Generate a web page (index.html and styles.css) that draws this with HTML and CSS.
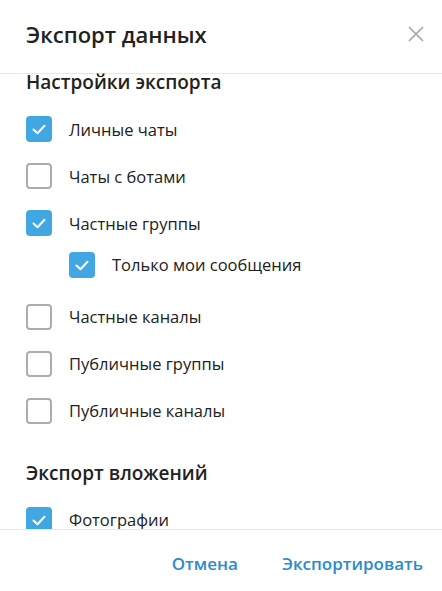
FILE: index.html
```html
<!DOCTYPE html>
<html lang="ru">
<head>
<meta charset="utf-8">
<link rel="stylesheet" href="styles.css">
</head>
<body>
<div class="dialog">
  <header class="head">
    <h1 class="title">Экспорт данных</h1>
    <button class="close" aria-label="Закрыть">
      <svg width="16" height="16" viewBox="0 0 16 16"><path d="M1 1L15 15M15 1L1 15" stroke="#a3a3a3" stroke-width="1.6" fill="none"/></svg>
    </button>
  </header>
  <main class="content">
    <h2 class="section-title first">Настройки экспорта</h2>
    <div class="row"><span class="box checked"><svg viewBox="0 0 26 26"><path d="M7.5 13.5l4 3.8 7-7.6" stroke="#fff" stroke-width="2" fill="none" stroke-linecap="round" stroke-linejoin="round"/></svg></span><span class="label">Личные чаты</span></div>
    <div class="row"><span class="box"></span><span class="label">Чаты с ботами</span></div>
    <div class="row"><span class="box checked"><svg viewBox="0 0 26 26"><path d="M7.5 13.5l4 3.8 7-7.6" stroke="#fff" stroke-width="2" fill="none" stroke-linecap="round" stroke-linejoin="round"/></svg></span><span class="label">Частные группы</span></div>
    <div class="row sub"><span class="box checked"><svg viewBox="0 0 26 26"><path d="M7.5 13.5l4 3.8 7-7.6" stroke="#fff" stroke-width="2" fill="none" stroke-linecap="round" stroke-linejoin="round"/></svg></span><span class="label">Только мои сообщения</span></div>
    <div class="row"><span class="box"></span><span class="label">Частные каналы</span></div>
    <div class="row"><span class="box"></span><span class="label">Публичные группы</span></div>
    <div class="row"><span class="box"></span><span class="label">Публичные каналы</span></div>
    <h2 class="section-title second">Экспорт вложений</h2>
    <div class="row"><span class="box checked"><svg viewBox="0 0 26 26"><path d="M7.5 13.5l4 3.8 7-7.6" stroke="#fff" stroke-width="2" fill="none" stroke-linecap="round" stroke-linejoin="round"/></svg></span><span class="label">Фотографии</span></div>
  </main>
  <footer class="foot">
    <button class="btn">Отмена</button>
    <button class="btn">Экспортировать</button>
  </footer>
</div>
</body>
</html>
```
FILE: styles.css
```css
* { box-sizing: border-box; }
html, body { margin: 0; padding: 0; background: #fff; }
body { font-family: "Open Sans", "Noto Sans", sans-serif; color: #222; }
.dialog { width: 442px; height: 591px; display: flex; flex-direction: column; overflow: hidden; }
.head { height: 74px; flex: none; display: flex; align-items: flex-start; justify-content: space-between; border-bottom: 1px solid #e7e7e7; padding: 0 18px 0 26px; }
.title { margin: 0; padding-top: 20px; font-size: 22px; line-height: 28px; font-weight: 600; color: #222; }
.close { border: 0; background: none; padding: 0; margin-top: 26px; width: 16px; height: 16px; display: block; }
.close svg { display: block; }
.content { flex: 1; min-height: 0; padding: 0 26px; }
.section-title { margin: 0; font-size: 19px; line-height: 18px; font-weight: 600; color: #222; }
.section-title.first { margin-top: -1px; margin-bottom: 14.5px; }
.section-title.second { margin-top: 30px; margin-bottom: 14px; }
.row { height: 47px; display: flex; align-items: center; gap: 17px; }
.row.sub { height: 36px; margin-bottom: 10.5px; padding-left: 43px; }
.box { width: 26px; height: 26px; flex: none; border: 2px solid #adadad; border-radius: 4px; display: block; }
.box.checked { border: 0; background: #40a7e3; }
.box svg { display: block; width: 26px; height: 26px; }
.label { font-size: 16.5px; color: #222; }
.foot { position: relative; background: #fff; height: 62px; flex: none; border-top: 1px solid #e7e7e7; display: flex; justify-content: flex-end; align-items: center; padding: 5px 9px 0 0; gap: 24px; }
.btn { border: 0; background: none; font-family: inherit; font-size: 17px; font-weight: 600; color: #2a8bd0; padding: 0 10px; }
```
